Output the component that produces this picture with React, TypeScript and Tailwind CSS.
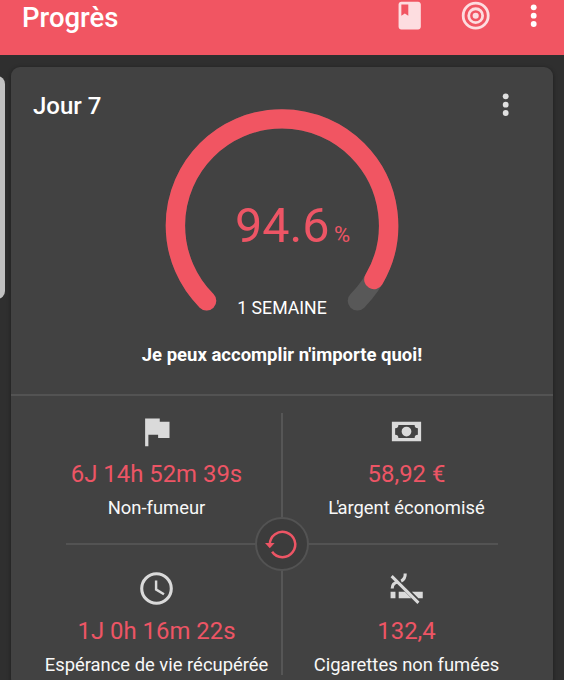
import React from 'react';

interface StatProps {
  icon: React.ReactNode;
  value: string;
  label: React.ReactNode;
}

interface IconProps {
  className?: string;
  children: React.ReactNode;
}

function Icon({ className, children }: IconProps) {
  return (
    <svg viewBox="0 0 24 24" fill="currentColor" className={className}>
      {children}
    </svg>
  );
}

function MoreIcon({ className }: { className: string }) {
  return (
    <Icon className={className}>
      <circle cx="12" cy="6" r="2.1" />
      <circle cx="12" cy="12" r="2.1" />
      <circle cx="12" cy="18" r="2.1" />
    </Icon>
  );
}

function Gauge({ percent }: { percent: number }) {
  return (
    <svg viewBox="0 0 234 234" className="h-[234px] w-[234px]" fill="none" strokeWidth="19.4" strokeLinecap="round">
      <path d="M41.6 192.8A106.6 106.6 0 1 1 192.4 192.8" stroke="#585858" />
      <path
        d="M41.6 192.8A106.6 106.6 0 1 1 192.4 192.8"
        stroke="#f15562"
        pathLength="100"
        strokeDasharray={`${percent} 200`}
      />
    </svg>
  );
}

function Stat({ icon, value, label }: StatProps) {
  return (
    <div className="flex flex-col items-center whitespace-nowrap">
      <div className="h-[39px] w-[39px] text-[#dadada]">{icon}</div>
      <p className="mt-[9px] text-[23.9px] leading-[29px] text-[#ed5565]">{value}</p>
      <p className="mt-2 text-[18.4px] leading-[22px] text-[#f8f8f8]">{label}</p>
    </div>
  );
}

export default function App() {
  return (
    <div className="relative h-[680px] w-[564px] overflow-hidden bg-[#2f2f2f] font-['Roboto',sans-serif] text-white">
      <header className="flex h-[54.5px] items-start justify-between bg-[#f15562] pl-[22px] pr-[14px]">
        <h1 className="mt-[2px] text-[27.5px] font-medium leading-8">Progrès</h1>
        <div className="-mt-px flex">
          <Icon className="h-[33.4px] w-[33.4px] text-[#fddde0]">
            <path d="M18 2H6c-1.1 0-2 .9-2 2v16c0 1.1.9 2 2 2h12c1.1 0 2-.9 2-2V4c0-1.1-.9-2-2-2zM6 4h5v8l-2.5-1.5L6 12V4z" />
          </Icon>
          <Icon className="ml-[32.5px] h-[33.4px] w-[33.4px] text-[#fddde0]">
            <g fill="none" stroke="currentColor" strokeWidth="2">
              <circle cx="12" cy="12" r="9" />
              <circle cx="12" cy="12" r="5" />
            </g>
            <circle cx="12" cy="12" r="2.2" />
          </Icon>
          <MoreIcon className="ml-[24.5px] h-[33.4px] w-[33.4px]" />
        </div>
      </header>

      <div className="absolute -left-3 top-[76px] h-[223px] w-[17px] rounded-lg bg-[#c2c2c2]" />

      <main className="ml-[11px] mt-[12.5px] h-[620px] w-[542px] rounded-[9px] bg-[#424242] shadow-[0_1px_4px_rgba(0,0,0,0.4)]">
        <section className="relative flex h-[329px] flex-col items-center border-b-2 border-[#535353] pt-[41px]">
          <h2 className="absolute left-[22px] top-[25px] text-[24px] font-medium leading-7">Jour 7</h2>
          <MoreIcon className="absolute right-[31px] top-[21px] h-[33.4px] w-[33.4px] text-[#e0e0e0]" />
          <Gauge percent={94.6} />
          <div className="absolute left-[224px] top-[130px] flex items-baseline text-[#ed5565]">
            <span className="text-[48.5px] leading-[58px]">94.6</span>
            <span className="ml-[4.5px] text-[22px]">%</span>
          </div>
          <p className="absolute top-[230px] text-[17.7px] leading-[22px]">1 SEMAINE</p>
          <p className="mt-[2px] text-[18.5px] font-bold leading-[22px]">Je peux accomplir n'importe quoi!</p>
        </section>

        <section className="relative h-[290px]">
          <div className="absolute left-[270px] top-[17px] h-[262px] w-[1.5px] bg-[#565656]" />
          <div className="absolute left-[55px] top-[147px] h-[2px] w-[432px] bg-[#535353]" />
          <div className="grid grid-cols-[250px_250px] gap-y-[50px] pl-[20.5px] pt-[16px]">
            <Stat
              value="6J 14h 52m 39s"
              label="Non-fumeur"
              icon={
                <Icon>
                  <path d="M14 6V4H5v17h2v-7h6v2h7V6z" />
                </Icon>
              }
            />
            <Stat
              value="58,92 €"
              label={
                <>
                  <span className="tracking-[-2px]">L'</span>argent économisé
                </>
              }
              icon={
                <Icon>
                  <path
                    fillRule="evenodd"
                    d="M3 6h18v12H3V6m9 3a3 3 0 0 1 3 3 3 3 0 0 1-3 3 3 3 0 0 1-3-3 3 3 0 0 1 3-3M7 8a2 2 0 0 1-2 2v4a2 2 0 0 1 2 2h10a2 2 0 0 1 2-2v-4a2 2 0 0 1-2-2H7z"
                  />
                </Icon>
              }
            />
            <Stat
              value="1J 0h 16m 22s"
              label="Espérance de vie récupérée"
              icon={
                <Icon>
                  <circle cx="12" cy="12" r="9.1" fill="none" stroke="currentColor" strokeWidth="1.9" />
                  <path d="M11 7h1.5v5.2l4.5 2.7-.8 1.2L11 13z" />
                </Icon>
              }
            />
            <Stat
              value="132,4"
              label="Cigarettes non fumées"
              icon={
                <Icon>
                  <path d="M2.2 14h3v4h-3zM7.200 14h3.800l4 4H7.200zM15.300 14H22v4h-2.700z" />
                  <path d="M2.200 5l1.300-1.300L20 20.200l-1.300 1.300z" />
                  <g fill="none" stroke="currentColor" strokeWidth="1.900">
                    <path d="M3.200 12c0-2.200 1-3.600 3.600-4" />
                    <path d="M11.200 2.800c.1 2.500-.6 3.700-2.500 4.600" />
                  </g>
                </Icon>
              }
            />
          </div>
          <div className="absolute left-[244px] top-[121px] flex h-[54px] w-[54px] items-center justify-center rounded-full border-2 border-[#535353] bg-[#3c3c3c] text-[#ed5565]">
            <svg viewBox="0 0 54 54" className="h-[54px] w-[54px] shrink-0" fill="none">
              <path d="M14.800 27.500A12.700 12.700 0 1 1 17.100 34.800" stroke="currentColor" strokeWidth="2.500" />
              <path d="M10 26h9.600l-4.800 5.200z" fill="currentColor" />
            </svg>
          </div>
        </section>
      </main>
    </div>
  );
}
